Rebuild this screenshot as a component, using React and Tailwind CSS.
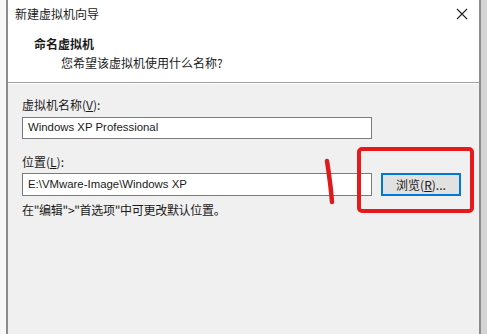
export default function App() {
  const cjk = "font-['Noto_Sans_CJK_SC',sans-serif]";
  const latin = "font-['Liberation_Sans','Noto_Sans_CJK_SC',sans-serif] text-[11.4px]";

  return (
    <div className={`relative flex h-[334px] w-[487px] overflow-hidden bg-[#f0f0f0] text-[12px] text-[#1a1a1a] ${cjk}`}>
      <div className="w-[6px] bg-[#f7f7f7]" />
      <div className="w-[2px] bg-[#8c8c8c]" />

      <div className="flex flex-1 flex-col">
        {/* title bar */}
        <div className="flex h-[28px] items-center justify-between bg-white pl-[7px] pr-[8px]">
          <span className="leading-none">新建虚拟机向导</span>
          <svg width="12" height="12" viewBox="0 0 12 12" className="mr-[3px]">
            <path d="M1 1L11 11M11 1L1 11" stroke="#222" strokeWidth="1.1" />
          </svg>
        </div>

        {/* header */}
        <div className="flex h-[54px] flex-col bg-white pl-[26px] pt-[8px]">
          <span className="font-bold leading-[16px]">命名虚拟机</span>
          <span className="mt-[3px] pl-[27px] leading-[16px]">您希望该虚拟机使用什么名称?</span>
        </div>
        <div className="h-px bg-[#a0a0a0]" />
        <div className="h-px bg-white" />

        {/* body */}
        <div className="flex flex-col pl-[14px] pt-[13px]">
          <span className="leading-[16px]">
            虚拟机名称(<span className="underline">V</span>):
          </span>
          <div className={`mt-[4px] flex h-[22px] w-[350px] items-center border border-[#7a7a7a] bg-white pl-[5px] ${latin}`}>
            Windows XP Professional
          </div>

          <span className="mt-[15px] leading-[16px]">
            位置(<span className="underline">L</span>):
          </span>
          <div className="mt-[3px] flex items-center gap-[9px]">
            <div className={`flex h-[23px] w-[350px] items-center border border-[#7a7a7a] bg-white pl-[5px] ${latin}`}>
              E:\VMware-Image\Windows XP
            </div>
            <div className="flex h-[23px] w-[80px] items-center justify-center border border-[#0078d7] bg-[#e1e1e1] shadow-[inset_0_0_0_1px_#0078d7]">
              <span className="leading-none">
                浏览(<span className="underline">R</span>)...
              </span>
            </div>
          </div>

          <span className="mt-[6px] leading-[16px] tracking-[-0.3px]">在"编辑"&gt;"首选项"中可更改默认位置。</span>
        </div>
      </div>

      <div className="w-[2px] bg-[#8c8c8c]" />
      <div className="w-[6px] bg-[#d4d4d4]" />

      {/* red annotations */}
      <div className="absolute left-[357px] top-[147px] h-[66px] w-[117px] rounded-[5px] border-[4px] border-[#e8191b]" />
      <svg className="absolute left-[322px] top-[156px]" width="16" height="52" viewBox="0 0 16 52">
        <path d="M5 5 C7 18 9 32 10 46" stroke="#e01a1a" strokeWidth="4.5" strokeLinecap="round" fill="none" />
      </svg>
    </div>
  );
}
